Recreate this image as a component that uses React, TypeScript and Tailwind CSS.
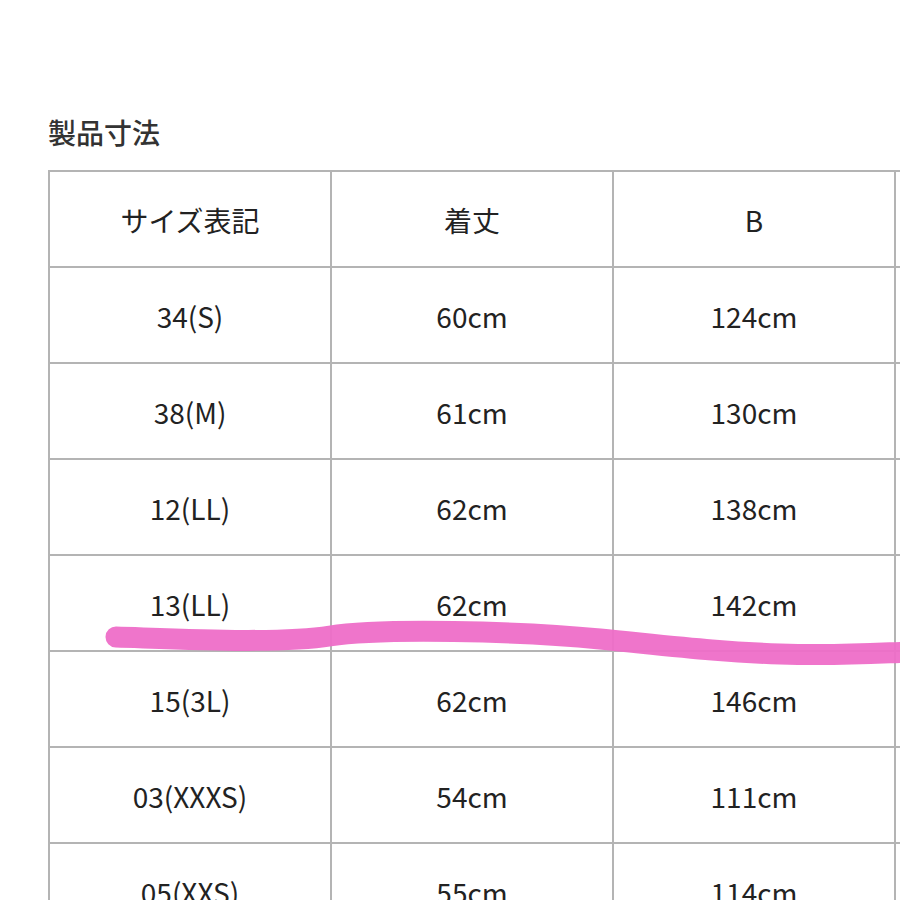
import React from "react"

const rows = [
  ["サイズ表記", "着丈", "B", ""],
  ["34(S)", "60cm", "124cm", ""],
  ["38(M)", "61cm", "130cm", ""],
  ["12(LL)", "62cm", "138cm", ""],
  ["13(LL)", "62cm", "142cm", ""],
  ["15(3L)", "62cm", "146cm", ""],
  ["03(XXXS)", "54cm", "111cm", ""],
  ["05(XXS)", "55cm", "114cm", ""],
]

export default function App() {
  return (
    <div
      className="relative h-[900px] w-[900px] overflow-hidden bg-white text-[#222]"
      style={{ fontFamily: '"Noto Sans CJK JP", "Noto Sans", sans-serif' }}
    >
      <div className="pt-[112px] pl-[48px]">
        <h2 className="text-[28px] leading-[40px] font-medium text-[#333]">製品寸法</h2>
        <div className="mt-[18px] w-[1130px] bg-[#b4b4b4] p-[2px]">
          <div className="grid grid-cols-[280px_280px_280px_280px] gap-[2px]">
            {rows.map((row, i) =>
              row.map((cell, j) => (
                <div
                  key={`${i}-${j}`}
                  className="flex h-[94px] items-center justify-center bg-white text-[28px] pt-[2px]"
                >
                  {cell}
                </div>
              ))
            )}
          </div>
        </div>
      </div>

      {/* pink marker stroke */}
      <svg className="pointer-events-none absolute inset-0" width="900" height="900" viewBox="0 0 900 900">
        <path
          d="M 116 637 C 180 639, 280 644, 330 636 S 520 631, 600 639 S 720 652, 780 654 S 880 653, 910 652"
          fill="none"
          stroke="#ee6ec8"
          strokeWidth="21"
          strokeLinecap="round"
          strokeLinejoin="round"
          opacity="0.95"
        />
      </svg>
    </div>
  )
}
